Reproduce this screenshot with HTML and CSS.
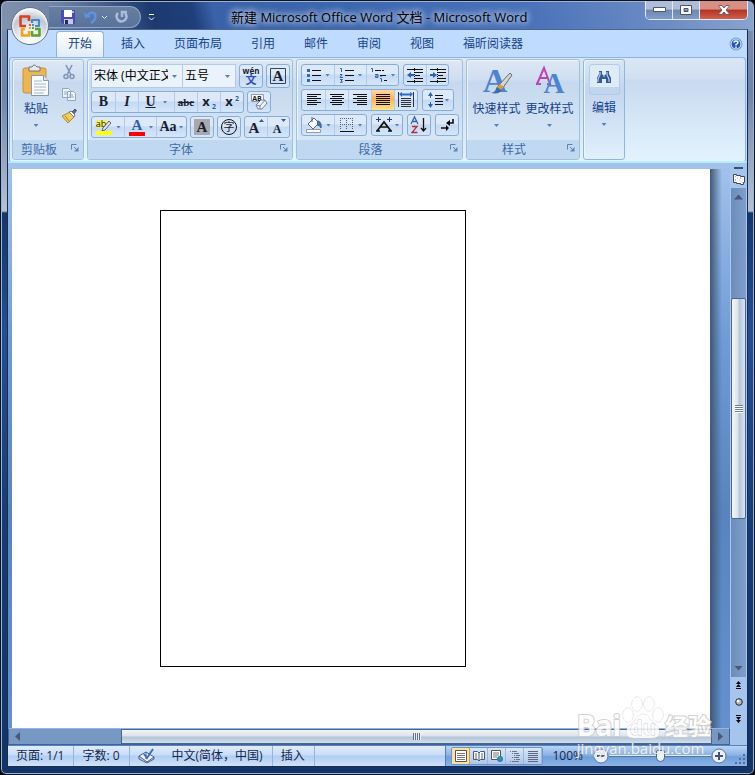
FILE: index.html
```html
<!DOCTYPE html>
<html lang="zh-CN">
<head>
<meta charset="utf-8">
<meta name="viewport" content="width=device-width">
<title>新建 Microsoft Office Word 文档 - Microsoft Word</title>
<link rel="stylesheet" href="styles.css">
</head>
<body>
<div class="window">
  <header class="titlebar">
    <button class="orb" aria-label="Office">
      <svg width="24" height="24" viewBox="0 0 24 24" fill="none" stroke-width="2.600" stroke-linejoin="round"><path d="M8 12H2.500V2.500H11V7" stroke="#d9421c"/><path d="M14 9V6H21V12H17" stroke="#3f8dd0" stroke-width="2.200"/><path d="M7 15H4V21.500H11V17" stroke="#f0a51d"/><path d="M14 17V21.500H21.500V15H17" stroke="#5ba331"/><path d="M11 10h2v2h-2z" fill="#e0612c"/><path d="M14 10h2v2h-2z" fill="#3f8dd0"/><path d="M11 13h2v2h-2z" fill="#f0a51d"/><path d="M14 13h2v2h-2z" fill="#5ba331"/></svg>
    </button>
    <div class="quick">
      <button aria-label="保存"><svg width="16" height="16" viewBox="0 0 16 16"><path d="M1 1h14v14H3l-2-2z" fill="#4a49b8"/><path d="M4 1h8v7H4z" fill="#fff"/><path d="M4 10h9v5H4z" fill="#c5cbe6"/><path d="M5 11h3v4H5z" fill="#25246b"/><path d="M12 2h2v2h-2z" fill="#aeb8ef"/></svg></button>
      <button aria-label="撤消"><svg width="16" height="16" viewBox="0 0 16 16" fill="none" stroke="#5d92e6" stroke-width="2.500"><path d="M4 7Q9 1 12 5Q14 10 8 14"/><path d="M1 3l1 6 6-1z" fill="#5d92e6" stroke="none"/></svg></button>
      <button class="narrow" aria-label="撤消列表"><svg width="7" height="5" viewBox="0 0 7 5"><path d="M1 1l2.500 2.500L6 1" fill="none" stroke="#dce7f7"/></svg></button>
      <button aria-label="重复"><svg width="16" height="16" viewBox="0 0 16 16" fill="none" stroke="#a9bddb" stroke-width="2.500"><path d="M4 4Q1 7 4 11Q7 14 11 11Q14 8 11 4M8 8V3h5"/></svg></button>
    </div>
    <button class="customize" aria-label="自定义快速访问工具栏"><svg width="7" height="7" viewBox="0 0 7 7"><path d="M1 .5h5M1 3.500l2.500 2.500L6 3.500" fill="none" stroke="#eef4fc"/></svg></button>
    <h1>新建 Microsoft Office Word 文档 - Microsoft Word</h1>
    <div class="caption">
      <button class="min" aria-label="最小化"><svg width="13" height="6" viewBox="0 0 13 6"><path d="M.5.5h12v4H.5z" fill="#fff" stroke="#4c5670"/></svg></button>
      <button class="max" aria-label="最大化"><svg width="12" height="10" viewBox="0 0 12 10"><path d="M.5.5h11v9H.5zM4 3.500h4v3H4z" fill="#fff" fill-rule="evenodd" stroke="#4c5670"/></svg></button>
      <button class="close" aria-label="关闭"><svg width="12" height="10" viewBox="0 0 12 10"><path d="M1 .5h3L6 3l2-2.500h3v1L8 5l3 3.500v1H8L6 7 4 9.500H1v-1L4 5 1 1.500z" fill="#fff" stroke="#5b4350" stroke-width=".8"/></svg></button>
    </div>
  </header>

  <div class="client">
    <nav class="tabs">
      <a class="active" href="#home">开始</a><a href="#insert">插入</a><a href="#layout">页面布局</a><a href="#ref">引用</a><a href="#mail">邮件</a><a href="#review">审阅</a><a href="#view">视图</a><a href="#foxit">福昕阅读器</a>
      <button class="help" aria-label="帮助"><svg width="14" height="14" viewBox="0 0 14 14"><circle cx="7" cy="7" r="6" fill="#2259c4" stroke="#7d9fd0"/><circle cx="7" cy="7" r="5" fill="none" stroke="#e9f3ff"/><path d="M5 5.500Q5 4 7 4t2 1.500Q9 6.500 7 7.500v1M7 9.500V11" fill="none" stroke="#fff" stroke-width="1.400"/></svg></button>
    </nav>

    <main class="ribbon">
      <section class="group">
        <div class="tools clipboard">
          <button class="big" aria-label="粘贴">
            <svg width="28" height="32" viewBox="0 0 28 32"><rect x="1" y="4" width="23" height="25" rx="2" fill="#eeb653" stroke="#cc8f35"/><path d="M7 3h3q2-4 5 0h3v4H7z" fill="#e9e9e9" stroke="#77736d"/><path d="M9.500 11.500h12l5 5v15h-17z" fill="#fbfdff" stroke="#8299b9"/><path d="M21.500 11.500v5h5" fill="#dce6f3" stroke="#8299b9"/><path d="M12 17h8M12 20h12M12 23h12M12 26h12M12 29h10" stroke="#a4b5cc"/></svg>
            <span>粘贴</span><i class="arrow"></i>
          </button>
          <div class="side">
            <button aria-label="剪切"><svg width="16" height="16" viewBox="0 0 16 16" fill="none" stroke="#8197b8"><path d="M5 1l5 10M11 1L6 11" stroke-width="1.600"/><circle cx="5" cy="12.500" r="2" stroke-width="1.600"/><circle cx="11" cy="12.500" r="2" stroke-width="1.600"/></svg></button>
            <button aria-label="复制"><svg width="16" height="16" viewBox="0 0 16 16" fill="#edf3fb" stroke="#91a7c8"><path d="M1.500 2.500h6l2 2v7h-8zM6.500 5.500h6l2 2v7h-8z"/><path d="M3 6h3M3 8h3M8 9h4M8 11h5"/></svg></button>
            <button aria-label="格式刷"><svg width="16" height="16" viewBox="0 0 16 16"><path d="M10 5l4-4 1.500 1.500L12 7z" fill="#69649f" stroke="#484a84"/><path d="M1 8l8-4 4 5-6 6z" fill="#f1cd55" stroke="#a98a36"/><path d="M8 4l5 5 1-2-4-4z" fill="#fff" stroke="#777"/><path d="M4 8l4 5" stroke="#a98a36"/></svg></button>
          </div>
        </div>
        <h2>剪贴板</h2><button class="launch" aria-label="剪贴板选项"><svg width="8" height="8" viewBox="0 0 8 8"><path d="M.5 5.500v-5h5M3 3l3 3" fill="none" stroke="#5c83b5"/><path d="M7.500 3v4.500H3z" fill="#5c83b5"/></svg></button>
      </section>

      <section class="group">
        <div class="tools rows font">
          <div class="row tall">
            <div class="combos"><label class="combo face"><select aria-label="字体"><option>宋体 (中文正文)</option></select><i class="arrow"></i></label><label class="combo size"><select aria-label="字号"><option>五号</option></select><i class="arrow"></i></label></div>
            <div class="set solo"><button aria-label="拼音指南"><svg width="20" height="20" viewBox="0 0 20 20"><text x="10" y="8" class="pinyin">wén</text><text x="10" y="18" class="wen">文</text></svg></button></div>
            <div class="set solo"><button aria-label="字符边框"><svg width="18" height="18" viewBox="0 0 18 18"><path d="M1.500 1.500h15v15h-15z" fill="none" stroke="#33445f"/><text x="9" y="14" class="serif s15">A</text></svg></button></div>
          </div>
          <div class="row">
            <div class="set"><button class="serif-label">B</button><button class="serif-label it">I</button><button class="under serif-label"><u>U</u><i class="arrow"></i></button><button class="serif-label abc"><s>abc</s></button><button aria-label="下标"><svg width="18" height="18" viewBox="0 0 18 18"><text x="6" y="13" class="sans s13">x</text><text x="14" y="16" class="sans blue s7">2</text></svg></button><button aria-label="上标"><svg width="18" height="18" viewBox="0 0 18 18"><text x="6" y="13" class="sans s13">x</text><text x="14" y="8" class="sans blue s7">2</text></svg></button></div>
            <div class="set solo"><button aria-label="清除格式"><svg width="18" height="18" viewBox="0 0 18 18"><path d="M1.500 1.500h12v7h-12z" fill="#fff" stroke="#8b9bb5"/><text x="7" y="8" class="sans s7">AB</text><path d="M6 12l5-5h4l2 3-5 6H8z" fill="#f4f5fb" stroke="#7681a3"/><path d="M6 12l4 1 5-6M10 13v3" fill="none" stroke="#7681a3"/></svg></button></div>
          </div>
          <div class="row">
            <div class="set"><button class="wide" aria-label="突出显示"><svg width="18" height="18" viewBox="0 0 18 18"><path d="M1 2h11v8H1z" fill="#f4ee60"/><text x="6" y="9" class="plain">ab</text><path d="M8 10l6-7 2 2-6 7-3 1z" fill="#dce5f3" stroke="#5c6578"/><path d="M1 13h16v4H1z" fill="#ff0"/></svg><i class="arrow"></i></button><button class="wide" aria-label="字体颜色"><svg width="18" height="18" viewBox="0 0 18 18"><text x="9" y="12" class="serif blue s15">A</text><path d="M1 14h16v4H1z" fill="#f00"/></svg><i class="arrow"></i></button><button class="case serif-label">Aa<i class="arrow"></i></button></div>
            <div class="set solo"><button aria-label="字符底纹"><svg width="18" height="18" viewBox="0 0 18 18"><path d="M1 1h16v16H1z" fill="#a9a9ad"/><text x="9" y="14" class="serif s15">A</text></svg></button></div>
            <div class="set solo"><button aria-label="带圈字符"><svg width="18" height="18" viewBox="0 0 18 18"><circle cx="9" cy="9" r="7.500" fill="none" stroke="#111"/><text x="9" y="13" class="zi">字</text></svg></button></div>
            <div class="set solo"><button aria-label="增大字体"><svg width="18" height="18" viewBox="0 0 18 18"><text x="7" y="15" class="serif s15">A</text><path d="M12 4l2.500-3L17 4z" fill="#315aa6"/></svg></button><button aria-label="缩小字体"><svg width="18" height="18" viewBox="0 0 18 18"><text x="7" y="15" class="serif s12">A</text><path d="M11 1h5l-2.500 3z" fill="#315aa6"/></svg></button></div>
          </div>
        </div>
        <h2>字体</h2><button class="launch" aria-label="字体选项"><svg width="8" height="8" viewBox="0 0 8 8"><path d="M.5 5.500v-5h5M3 3l3 3" fill="none" stroke="#5c83b5"/><path d="M7.500 3v4.500H3z" fill="#5c83b5"/></svg></button>
      </section>

      <section class="group">
        <div class="tools rows para">
          <div class="row">
            <div class="set"><button class="wide" aria-label="项目符号"><svg width="16" height="16" viewBox="0 0 16 16"><path d="M6 3.500h9M6 8.500h9M6 13.500h9" stroke="#111"/><path d="M1 2h3v3H1zM1 7h3v3H1zM1 12h3v3H1z" fill="#3c65b0"/></svg><i class="arrow"></i></button><button class="wide" aria-label="编号"><svg width="16" height="16" viewBox="0 0 16 16"><path d="M6 3.500h9M6 8.500h9M6 13.500h9" stroke="#111"/><path d="M1 1.500h1.500V5M1 7.500h2L1 10.500h3M1 12.500h2.500L2 14l1.500 1L1 15.500" fill="none" stroke="#315fae"/></svg><i class="arrow"></i></button><button class="wide" aria-label="多级列表"><svg width="18" height="16" viewBox="0 0 18 16"><path d="M5 3.500h9M10 8.500h7M14 13.500h3" stroke="#111" stroke-dasharray="6 1"/><path d="M1 1.500h1.500V5M5 7.500h3v3H5.500V9H8M10 11.500h1.500V15M11 9v1" fill="none" stroke="#315fae"/></svg><i class="arrow"></i></button></div>
            <div class="set solo"><button aria-label="减少缩进量"><svg width="18" height="16" viewBox="0 0 18 16"><path d="M1 2.500h16M9 5.500h8M9 8.500h5M9 11.500h8M1 14.500h16" stroke="#111"/><path d="M8.500 1v15" stroke="#111" stroke-dasharray="1 1"/><path d="M1 8l4-3v2h3v2H5v2z" fill="#2861c4"/></svg></button><button aria-label="增加缩进量"><svg width="18" height="16" viewBox="0 0 18 16"><path d="M1 2.500h16M9 5.500h8M9 8.500h5M9 11.500h8M1 14.500h16" stroke="#111"/><path d="M8.500 1v15" stroke="#111" stroke-dasharray="1 1"/><path d="M8 8L4 5v2H1v2h3v2z" fill="#2861c4"/></svg></button></div>
          </div>
          <div class="row">
            <div class="set"><button aria-label="左对齐"><svg width="16" height="14" viewBox="0 0 16 14"><path d="M1 1.500h14M1 3.500h10M1 5.500h14M1 7.500h10M1 9.500h14M1 11.500h10" stroke="#111"/></svg></button><button aria-label="居中"><svg width="16" height="14" viewBox="0 0 16 14"><path d="M1 1.500h14M3 3.500h10M1 5.500h14M3 7.500h10M1 9.500h14M3 11.500h10" stroke="#111"/></svg></button><button aria-label="右对齐"><svg width="16" height="14" viewBox="0 0 16 14"><path d="M1 1.500h14M5 3.500h10M1 5.500h14M5 7.500h10M1 9.500h14M5 11.500h10" stroke="#111"/></svg></button><button class="on" aria-label="两端对齐"><svg width="16" height="14" viewBox="0 0 16 14"><path d="M1 1.500h14M1 3.500h14M1 5.500h14M1 7.500h14M1 9.500h14M1 11.500h14" stroke="#111"/></svg></button><button aria-label="分散对齐"><svg width="18" height="18" viewBox="0 0 18 18"><path d="M1.500 1v15M16.500 1v15M4 7.500h10M4 9.500h10M4 11.500h10M4 13.500h10M4 15.500h10" stroke="#333"/><path d="M2 3l3-2v1.500h8V1l3 2-3 3V4.500H5V6z" fill="#2e68c8"/></svg></button></div>
            <div class="set solo"><button class="wide" aria-label="行距"><svg width="16" height="16" viewBox="0 0 16 16"><path d="M8 3.500h8M8 6.500h8M8 9.500h8M8 12.500h8" stroke="#111"/><path d="M3.500 0L6 4H4v2H3V4H1zM3.500 16L1 12h2v-2h1v2h2z" fill="#2b62bd"/></svg><i class="arrow"></i></button></div>
          </div>
          <div class="row">
            <div class="set"><button class="wide" aria-label="底纹"><svg width="18" height="18" viewBox="0 0 18 18"><path d="M3 8l6-6 5 5-6 6z" fill="#fff" stroke="#536b91"/><path d="M7 1v5M12 5q5 0 4 7-1-3-4-3" fill="#3d70bf" stroke="#3d5e94"/><path d="M1.500 13.500h14v3h-14z" fill="#fff" stroke="#999"/></svg><i class="arrow"></i></button><button class="wide" aria-label="边框"><svg width="16" height="16" viewBox="0 0 16 16"><path d="M1.500 1v12M7.500 1v12M13.500 1v12M1 1.500h14M1 7.500h14" stroke="#52617b" stroke-dasharray="1 1"/><path d="M1 14.500h14" stroke="#111"/></svg><i class="arrow"></i></button></div>
            <div class="set solo"><button class="wide" aria-label="中文版式"><svg width="18" height="18" viewBox="0 0 18 18"><path d="M2 15L9 6l7 9M5 11h8M1 15h4M13 15h4" fill="none" stroke="#111" stroke-width="1.700"/><path d="M1 3.500h5M3.500 1v5M12 3.500h5M14.500 1v5" stroke="#19369a"/></svg><i class="arrow"></i></button></div>
            <div class="set solo"><button aria-label="排序"><svg width="18" height="18" viewBox="0 0 18 18"><path d="M1 8l3.500-7L8 8M3 5.500h3.500" fill="none" stroke="#315fae" stroke-width="1.300"/><path d="M2 10.500h5l-5 6h5.500" fill="none" stroke="#b22d35" stroke-width="1.300"/><path d="M13.500 2v13M11 12l2.500 3 2.500-3" fill="none" stroke="#111" stroke-width="1.300"/></svg></button></div>
            <div class="set solo"><button aria-label="显示标记"><svg width="18" height="18" viewBox="0 0 18 18"><path d="M15 3v4h-4M3 12h6" fill="none" stroke="#111" stroke-width="1.600"/><path d="M8 7l4-3v6zM11 12L8 9v6z"/></svg></button></div>
          </div>
        </div>
        <h2>段落</h2><button class="launch" aria-label="段落选项"><svg width="8" height="8" viewBox="0 0 8 8"><path d="M.5 5.500v-5h5M3 3l3 3" fill="none" stroke="#5c83b5"/><path d="M7.500 3v4.500H3z" fill="#5c83b5"/></svg></button>
      </section>

      <section class="group">
        <div class="tools styles">
          <button class="big"><svg width="32" height="32" viewBox="0 0 32 32"><text x="14" y="28" class="serif art">A</text><path d="M17 22L29 9l2 2-10 14z" fill="#d7d6d2" stroke="#686867"/><path d="M10 29q5-1 5-5 3-4 6 0 0 7-11 5z" fill="#3f6cae"/><path d="M16 23l3-3 4 3-3 3z" fill="#d69a42"/></svg><span>快速样式</span><i class="arrow"></i></button>
          <button class="big"><svg width="32" height="32" viewBox="0 0 32 32"><path d="M2 20h5M3 20L10 4l6 16h-3M6 14h7" fill="none" stroke="#bd44b4" stroke-width="2"/><text x="20" y="29" class="serif art2">A</text></svg><span>更改样式</span><i class="arrow"></i></button>
        </div>
        <h2>样式</h2><button class="launch" aria-label="样式选项"><svg width="8" height="8" viewBox="0 0 8 8"><path d="M.5 5.500v-5h5M3 3l3 3" fill="none" stroke="#5c83b5"/><path d="M7.500 3v4.500H3z" fill="#5c83b5"/></svg></button>
      </section>

      <section class="group collapsed">
        <button class="big"><span class="tile"><svg width="16" height="16" viewBox="0 0 16 16"><path d="M3 2h3v3l1 1h2l1-1V2h3v3l2 4v5h-5v-4H6v4H1V9l2-4z" fill="#34589a"/><path d="M4 3v3l-2 4v3M11 3v3l2 4v3M7 7h2" fill="none" stroke="#dbeafd"/></svg></span><span>编辑</span><i class="arrow"></i></button>
      </section>
    </main>

    <div class="workspace">
      <div class="sheet"><div class="frame"></div></div>
      <div class="desk"></div>
      <div class="vscroll">
        <i class="split"></i>
        <button class="browse" aria-label="标尺"><svg width="14" height="12" viewBox="0 0 14 12"><path d="M1.500 1.500h3v1h4v1h4v6h-1v2h-3v-1h-4v-1h-3z" fill="#fff" stroke="#3e4b5f"/><path d="M3 3l8 7M3 7h3M8 5h3" stroke="#87a" stroke-dasharray="1 2"/></svg></button>
        <div class="track">
          <button aria-label="向上"><i class="tri up"></i></button>
          <div class="lead"></div><div class="thumb"><i></i></div><div class="trail"></div>
          <button aria-label="向下"><i class="tri down"></i></button>
        </div>
        <div class="nav">
          <button aria-label="前一页"><svg width="7" height="8" viewBox="0 0 7 8"><path d="M3.500 0L6 3H1zM3.500 3L6 6H1zM1 7h5v1H1z"/></svg></button>
          <button aria-label="选择浏览对象"><svg width="8" height="8" viewBox="0 0 8 8"><circle cx="4" cy="4" r="3.300" fill="#b8b8b8" stroke="#222"/><circle cx="3" cy="3" r="1.300" fill="#fff"/></svg></button>
          <button aria-label="下一页"><svg width="7" height="8" viewBox="0 0 7 8"><path d="M3.500 8L6 5H1zM3.500 5L6 2H1zM1 0h5v1H1z"/></svg></button>
        </div>
      </div>
      <div class="hscroll">
        <button aria-label="向左"><i class="tri left"></i></button><div class="bar"><i></i></div><button aria-label="向右"><i class="tri right"></i></button>
      </div>
    </div>

    <footer class="status">
      <button>页面: 1/1</button><button>字数: 0</button>
      <button class="lang"><svg width="18" height="16" viewBox="0 0 18 16"><path d="M1 8l7-4 8 5-7 5z" fill="#eff4ff" stroke="#4c5f89"/><path d="M1 8v3l8 4 7-4V9M8 4v7" fill="none" stroke="#4c5f89"/><path d="M6 6l3 4 6-9" fill="none" stroke="#3e70c9" stroke-width="2"/></svg><span>中文(简体，中国)</span></button>
      <button>插入</button><div class="blank"></div>
      <div class="right">
        <div class="views">
          <button class="on" aria-label="页面视图"><svg width="12" height="12" viewBox="0 0 12 12"><path d="M.5.5h11v11H.5z" fill="#fff" stroke="#555"/><path d="M2 3.500h8M2 5.500h8M2 7.500h8M2 9.500h8" stroke="#777"/></svg></button>
          <button aria-label="阅读版式"><svg width="12" height="12" viewBox="0 0 12 12"><path d="M.5 1.500h4L6 3l1.500-1.500h4v8h-4L6 11 4.500 9.500h-4zM6 3v8" fill="#f7faff" stroke="#4b5a70"/><path d="M2 4h2M2 6h2M2 8h2M8 4h2M8 6h2M8 8h2" stroke="#666"/></svg></button>
          <button aria-label="Web 版式"><svg width="12" height="12" viewBox="0 0 12 12"><path d="M.5.5h9v9h-9z" fill="#fff" stroke="#555"/><path d="M2 3h6M2 5h6M2 7h4" stroke="#777"/><circle cx="9" cy="9" r="3" fill="#2583b5"/><path d="M8 7l2 1-1 3z" fill="#58ad51"/></svg></button>
          <button aria-label="大纲视图"><svg width="12" height="12" viewBox="0 0 12 12"><path d="M1 1.500h7M3 3.500h7M5 5.500h6M3 7.500h7M5 9.500h6M1 11.500h9" stroke="#687487" stroke-dasharray="1 1 9"/></svg></button>
          <button aria-label="普通视图"><svg width="12" height="12" viewBox="0 0 12 12"><path d="M1 1.500h10M1 3.500h10M1 5.500h10M1 7.500h10M1 9.500h10M1 11.500h10" stroke="#59687f"/></svg></button>
        </div>
        <button class="percent">100%</button>
        <div class="zoom"><button aria-label="缩小"><svg width="16" height="16" viewBox="0 0 16 16"><circle cx="8" cy="8" r="7" fill="#e9f1fc" stroke="#5b7298"/><path d="M4 8h8" stroke="#425273" stroke-width="2"/></svg></button><input type="range" min="10" max="190" value="100" aria-label="显示比例"><button aria-label="放大"><svg width="16" height="16" viewBox="0 0 16 16"><circle cx="8" cy="8" r="7" fill="#e9f1fc" stroke="#5b7298"/><path d="M4 8h8M8 4v8" stroke="#425273" stroke-width="2"/></svg></button></div>
        <svg class="grip" width="12" height="12" viewBox="0 0 12 12"><path d="M9 1h2v2H9zM5 5h2v2H5zM9 5h2v2H9zM1 9h2v2H1zM5 9h2v2H5zM9 9h2v2H9z" fill="#526f9f"/></svg>
      </div>
    </footer>
  </div>
  <div class="watermark" aria-hidden="true">
    <div class="brand"><span>Bai</span><svg width="42" height="44" viewBox="0 0 42 44"><g fill="#fff" stroke="#ccc"><ellipse cx="6" cy="19" rx="5" ry="7"/><ellipse cx="15" cy="8" rx="5" ry="7"/><ellipse cx="27" cy="8" rx="5" ry="7"/><ellipse cx="36" cy="19" rx="5" ry="7"/><path d="M21 18Q25 18 29 24L36 31Q40 41 31 42H11Q1 41 6 31L13 24Q17 18 21 18z"/></g><text x="21" y="39">du</text></svg><span class="cjk">经验</span></div>
    <p>jingyan.baidu.com</p>
  </div>
</div>
</body>
</html>
```

FILE: styles.css
```css
* { box-sizing: border-box; }
body { margin: 0; background: #000; font: 12px/16px "Open Sans", "Noto Sans CJK SC", sans-serif; color: #15428b; }
button { border: 0; padding: 0; background: none; font: inherit; color: inherit; display: flex; align-items: center; justify-content: center; }
h1, h2, p { margin: 0; font: inherit; }
svg { flex: none; display: block; overflow: visible; }
a { color: inherit; text-decoration: none; }

.window {
  position: relative; min-height: 100vh; padding: 0 6px 7px; display: flex; flex-direction: column;
  border: 1px solid #0a1424; border-radius: 7px 7px 6px 6px; box-shadow: inset 0 0 0 1px #9db3d3;
  background: linear-gradient(75deg, #8292ad 0, #7184a6 60px, #1d3a70 150px, #1f3f7a 190px, #3a62a8 210px, #3c66ae 45%, #4a72ba 70%, #6d8dc4 88%, #8ba5cd) 0 0 / 100% 30px no-repeat, linear-gradient(#7c90b3 0, #6e84a8 90px, #b5c2d5 210px, #14366e 212px, #234f91 330px, #163a73 70%, #123468);
}

.titlebar { position: relative; height: 28px; display: flex; align-items: center; }
.orb { position: absolute; z-index: 2; left: 4px; top: 6px; width: 38px; height: 38px; border: 1px solid #64748c; border-radius: 50%; background: radial-gradient(circle at 50% 85%, #fff 0, #e7e9ee 35%, #bfc7d2 60%, #eceff4 80%); box-shadow: inset 0 0 2px 1px #fff; }
.quick { height: 22px; margin: 4px 0 0 42px; padding: 0 10px 0 11px; display: flex; align-items: center; gap: 7px; border: 1px solid #8ea4c8; border-left: 0; border-radius: 0 11px 11px 0; background: linear-gradient(#687f9f, #58729b); }
.quick .narrow { margin: 0 -1px 0 -5px; }
.customize { margin: 4px 0 0 7px; }
.titlebar h1 { flex: 1; margin: 3px 0 0 76px; color: #000; font-size: 13px; white-space: nowrap; text-shadow: 0 0 6px #b9cae8, 0 0 6px #b9cae8, 0 0 8px #b9cae8; }
.caption { align-self: flex-start; display: flex; border: 1px solid #e0e9f7; border-top: 0; border-radius: 0 0 5px 5px; overflow: hidden; }
.caption button { width: 27px; height: 18px; border-right: 1px solid #dce7f7; background: linear-gradient(#afbed6 45%, #6e87b2 50%, #819cc8); }
.caption .close { width: 47px; border: 0; background: linear-gradient(#d99084 45%, #b23322 50%, #d0604c); }

.client { flex: 1; display: flex; flex-direction: column; border: 1px solid #172c50; border-top-color: #4f6588; background: #bfdbff; }
.tabs { height: 27px; display: flex; gap: 1px; padding-left: 48px; align-items: flex-end; white-space: nowrap; }
.tabs a { height: 26px; padding: 5px 14px 0; }
.tabs .active { width: 48px; margin-right: 2px; padding: 4px 11px 0; border: 1px solid #8db2e3; border-bottom: 0; border-radius: 4px 4px 0 0; background: linear-gradient(#fff, #e1ecf9); }
.help { margin: 0 4px 6px auto; }

.ribbon { height: 106px; margin: 0 1px; padding: 1px 2px; display: flex; gap: 3px; border: 1px solid #8db2e3; border-bottom: 2px solid #b4f0fb; border-radius: 4px; background: linear-gradient(#dbe7f5 0, #d0dff1 20%, #c8daf0 22%, #e3f3fd); }
.group { position: relative; height: 101px; display: flex; flex-direction: column; border: 1px solid #9fc0de; border-radius: 3px; overflow: hidden; background: linear-gradient(#dee8f5 0, #d0def1 20%, #c6d8ee 22%, #dcebf8); box-shadow: inset 1px 1px #edf5fc; }
.group h2 { height: 19px; line-height: 19px; text-align: center; color: #3e6aaa; background: #c1d9f0; padding-right: 18px; }
.launch { position: absolute; right: 4px; bottom: 7px; width: 9px; height: 9px; }
.tools { flex: 1; display: flex; }
.clipboard { width: 70px; }
.big { flex-direction: column; justify-content: flex-start; padding-top: 4px; white-space: nowrap; }
.big span { margin-top: 5px; height: 16px; }
.big .arrow { margin: 7px 0 0; }
.clipboard .big { width: 46px; }
.clipboard .side { padding: 4px 0 0 2px; display: flex; flex-direction: column; gap: 6px; }
.arrow { flex: none; width: 5px; height: 3px; background: #5581bd; clip-path: polygon(0 0, 100% 0, 50% 100%); }
.rows { flex-direction: column; gap: 3px; padding: 4px 2px 0 3px; }
.row { display: flex; gap: 3px; height: 22px; }
.para { padding: 4px 3px 0 4px; }
.para .row { gap: 4px; }
.font .tall { height: 24px; }
.set { display: flex; border: 1px solid #87add9; border-radius: 3px; overflow: hidden; background: linear-gradient(#dde9f8 45%, #c5d9f2 50%, #d5e6fa); }
.set button { width: 23px; border-left: 1px solid #b2cbea; }
.set button:first-child { border-left: 0; }
.solo button { width: 22px; }
.set .wide { width: 32px; gap: 3px; }
.solo .wide { width: 30px; gap: 2px; }
.set .under { width: 36px; gap: 7px; }
.set .on { background: linear-gradient(#fdd9a5, #fdb257 45%, #fee58d); }
.combos { display: flex; background: #eaf2fb; }
.combo { position: relative; border: 1px solid #b3cbe8; width: 54px; background: #eaf2fb; }
.combo.face { width: 91px; border-right: 0; }
.combo select { appearance: none; width: 100%; height: 22px; border: 0; padding: 0 14px 0 2px; background: none; color: #000; font: inherit; }
.combo .arrow { position: absolute; right: 5px; top: 10px; }
.serif-label, .serif { font-family: "Liberation Serif", serif; font-weight: bold; }
.serif-label { font-size: 14px; color: #16202f; }
.it { font-style: italic; }
.set .abc { font-size: 11px; }
.set .case { width: 30px; gap: 2px; }
text { text-anchor: middle; fill: #17202f; }
.s15 { font-size: 15px; } .s12 { font-size: 12px; } .s13 { font-size: 13px; } .s7 { font-size: 7px; }
.sans { font-family: "Open Sans", sans-serif; font-weight: bold; }
.blue { fill: #315fae; }
.pinyin { font: bold 8px "Open Sans"; }
.wen { font: bold 11px "Noto Sans CJK SC"; fill: #3150c4; }
.zi { font: 11px "Noto Sans CJK SC"; }
.plain { font: 9px "Open Sans"; }
.styles .big { width: 53px; }
.styles { padding: 0 3px; }
.art { font-size: 34px; fill: #4c84d1; } .art2 { font-size: 29px; fill: #4c84d1; }
.collapsed { width: 42px; border-color: #8fb6dd; background: linear-gradient(#d9e6f6 0, #c3d6ef 30%, #e1f0fc); }
.big .tile { width: 31px; height: 31px; margin: 0; display: flex; justify-content: center; padding-top: 4px; border: 1px solid #b3cbea; border-radius: 3px; background: linear-gradient(#e0ebf8 75%, #c1d5ee 76%); }

.workspace { flex: 1; display: grid; grid-template-columns: minmax(0, 1fr) 20px 17px; grid-template-rows: minmax(0, 1fr) 17px; background: linear-gradient(#a4c2ec, #6f9cd6 30%, #5884be 60%, #6592d0); }
.sheet { margin: 6px 0 0 4px; padding: 41px 148px; background: #fff; }
.frame { width: 306px; height: 457px; border: 1px solid #000; }
.desk { margin-top: 6px; background: linear-gradient(90deg, #3e5878, rgba(70, 110, 160, 0) 60%); }
.vscroll { grid-row: 1 / 3; grid-column: 3; display: flex; flex-direction: column; align-items: stretch; background: #a5c5ef; }
.split { height: 2px; width: 9px; margin: 4px auto 0; background: #3e4e75; }
.browse { height: 19px; }
.track { flex: 1; display: flex; flex-direction: column; border-left: 1px solid #a9c7ef; border-right: 1px solid #a9c7ef; background: linear-gradient(90deg, #6c8cba, #7e9fcb); }
.track button { height: 18px; }
.lead { flex: 93; } .trail { flex: 141; }
.thumb { flex: 220; display: flex; align-items: center; justify-content: center; border: 1px solid #4d6492; border-radius: 2px; background: linear-gradient(90deg, #f4f7fb, #dae3ec 45%, #b4c5d9 55%, #d8e4f2); }
.thumb i { width: 8px; height: 8px; background: repeating-linear-gradient(#6c7c91 0 1px, #fff 1px 2px); }
.nav { height: 68px; padding-top: 4px; display: flex; flex-direction: column; gap: 9px; }
.tri { width: 9px; height: 5px; background: #4a5778; clip-path: polygon(0 100%, 50% 0, 100% 100%); }
.down { clip-path: polygon(0 0, 100% 0, 50% 100%); }
.left, .right.tri { width: 5px; height: 9px; clip-path: polygon(100% 0, 100% 100%, 0 50%); }
.right.tri { clip-path: polygon(0 0, 100% 50%, 0 100%); }
.hscroll { grid-column: 1 / 3; display: flex; border: 1px solid #3f639b; border-top-color: #91b5e6; background: #7698c3; }
.hscroll button { width: 17px; }
.bar { flex: 1; margin-left: 95px; display: flex; align-items: center; justify-content: center; border: 1px solid #4c6390; background: linear-gradient(#f3f5f8, #dce4ed 45%, #b3c4d7 55%, #d2dfec); }
.bar i { width: 8px; height: 7px; background: repeating-linear-gradient(90deg, #627189 0 1px, #e8eef5 1px 2px); }

.status { height: 21px; display: flex; color: #15284b; white-space: nowrap; border-top: 1px solid #5883bf; background: linear-gradient(#e0ebfa 0, #c9ddf6 45%, #afcdf5 50%, #d0e2f8); }
.status > button { padding: 0 9px 0 8px; border-right: 1px solid #94b4dd; }
.status .lang { gap: 16px; }
.blank { flex: 1; }
.status .right { display: flex; align-items: center; background: linear-gradient(#b8d5f7, #8cb2e5 45%, #709fda 55%, #8db4e8); border-left: 1px solid #537eb7; padding-left: 5px; }
.views { height: 18px; display: flex; border: 1px solid #6e94c8; border-radius: 2px; background: linear-gradient(#d8e6f8, #afc8e8); }
.views button { width: 18px; border-right: 1px solid #9ab8df; }
.views .on { background: #fce0a1; border-color: #cb9b4a; }
.percent { margin: 0 10px 0 9px; }
.zoom { display: flex; align-items: center; width: 134px; }
.zoom input { appearance: none; flex: 1; min-width: 0; height: 16px; margin: 0; background: linear-gradient(transparent 7px, #dceafd 7px 8px, #5676a4 8px 9px, transparent 9px); }
.zoom input::-webkit-slider-thumb { appearance: none; width: 9px; height: 12px; border: 1px solid #49648f; border-radius: 2px 2px 5px 5px; background: #eef4fc; }
.grip { margin: 6px 1px 0 7px; }

.watermark { position: absolute; right: 43px; bottom: 17px; color: #fff; opacity: .85; }
.brand { display: flex; align-items: flex-end; font: bold 28px/30px "Open Sans", sans-serif; -webkit-text-stroke: 2px #ccc; paint-order: stroke fill; }
.brand svg { margin: 0 1px; }
.brand text { fill: #fff; stroke: #ccc; font: bold 20px "Open Sans"; }
.brand .cjk { font: bold 23px/30px "Noto Sans CJK SC"; }
.watermark p { font: 15px/17px "Open Sans", sans-serif; text-shadow: 0 0 1px #999; }
```
